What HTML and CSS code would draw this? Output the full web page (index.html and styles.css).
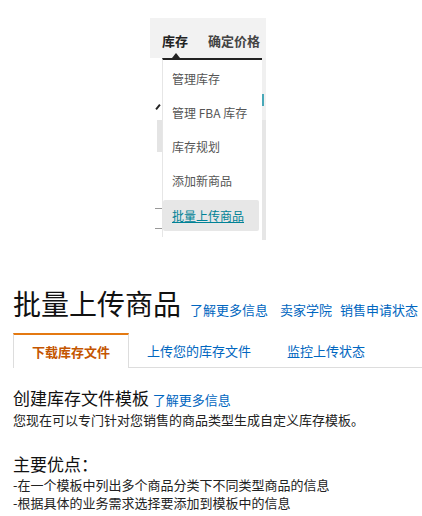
FILE: index.html
```html
<!DOCTYPE html>
<html lang="zh-CN">
<head>
    <meta charset="UTF-8">
    <meta name="viewport" content="width=device-width, initial-scale=1.0">
    <title>批量上传商品</title>
    <link rel="stylesheet" href="styles.css">
</head>
<body>

    <div class="shot">
        <div class="shot-bar">
            <span class="bar-item active">库存</span>
            <span class="bar-item">确定价格</span>
        </div>
        <div class="shot-body">
            <div class="shot-left">
                <span class="slash"></span>
                <span class="gray-block"></span>
                <span class="tick tick-1"></span>
                <span class="tick tick-2"></span>
            </div>
            <div class="menu">
                <span class="caret"></span>
                <div class="menu-item">管理库存</div>
                <div class="menu-item">管理 FBA 库存</div>
                <div class="menu-item">库存规划</div>
                <div class="menu-item">添加新商品</div>
                <div class="menu-item selected"><a href="#">批量上传商品</a></div>
            </div>
            <div class="shot-right">
                <span class="teal-mark"></span>
                <span class="right-block"></span>
            </div>
        </div>
    </div>

    <div class="page">
        <div class="title-row">
            <h1>批量上传商品</h1>
            <a href="#" class="link">了解更多信息</a>
            <a href="#" class="link">卖家学院</a>
            <a href="#" class="link last">销售申请状态</a>
        </div>

        <ul class="tabs">
            <li class="tab active">下载库存文件</li>
            <li class="tab"><a href="#">上传您的库存文件</a></li>
            <li class="tab"><a href="#">监控上传状态</a></li>
            <li class="tab-rest"></li>
        </ul>

        <div class="content">
            <h2>创建库存文件模板 <a href="#" class="link">了解更多信息</a></h2>
            <p>您现在可以专门针对您销售的商品类型生成自定义库存模板。</p>

            <h2 class="mt">主要优点：</h2>
            <ul class="points">
                <li>-在一个模板中列出多个商品分类下不同类型商品的信息</li>
                <li>-根据具体的业务需求选择要添加到模板中的信息</li>
            </ul>
        </div>
    </div>

</body>
</html>
```

FILE: styles.css
```css
* {
    margin: 0;
    padding: 0;
    box-sizing: border-box;
}

body {
    font-family: "Noto Sans CJK SC", "Noto Sans", sans-serif;
    color: #222;
    background: #fff;
}

a {
    color: #0066c0;
    text-decoration: none;
}

/* embedded menu screenshot */
.shot {
    width: 116px;
    height: 222px;
    margin: 18px 0 0 150px;
    display: flex;
    flex-direction: column;
}

.shot-bar {
    height: 40px;
    background: #f2f2f2;
    display: flex;
    align-items: center;
    gap: 20px;
    padding: 4px 0 0 12px;
    font-size: 13px;
    font-weight: bold;
    color: #444;
}

.bar-item.active {
    color: #222;
}

.shot-body {
    flex: 1;
    display: flex;
}

.shot-left {
    width: 12px;
    position: relative;
}

.slash {
    position: absolute;
    left: 7px;
    top: 46px;
    width: 2px;
    height: 6px;
    background: #222;
    transform: rotate(40deg);
}

.gray-block {
    position: absolute;
    left: 7px;
    top: 62px;
    width: 5px;
    height: 32px;
    background: #e4e4e4;
}

.tick {
    position: absolute;
    left: 5px;
    width: 7px;
    height: 1px;
    background: #999;
}

.tick-1 {
    top: 150px;
}

.tick-2 {
    top: 170px;
}

.menu {
    width: 100px;
    height: 179px;
    background: #fff;
    border-top: 2px solid #222;
    border-left: 1px solid #e6e6e6;
    padding-top: 1px;
    position: relative;
}

.caret {
    position: absolute;
    left: 9px;
    top: -7px;
    border-left: 4px solid transparent;
    border-right: 4px solid transparent;
    border-bottom: 5px solid #222;
}

.menu-item {
    height: 34px;
    display: flex;
    align-items: center;
    padding-left: 9px;
    font-size: 12px;
    color: #555;
}

.menu-item.selected {
    height: 31px;
    margin: 3px 3px 0 0;
    background: #e7e7e7;
    border-radius: 2px;
}

.menu-item.selected a {
    color: #008296;
    text-decoration: underline;
}

.shot-right {
    flex: 1;
    background: #f0f0f0;
    position: relative;
}

.teal-mark {
    position: absolute;
    left: 0;
    top: 36px;
    width: 2px;
    height: 12px;
    background: #48a8b8;
}

.right-block {
    position: absolute;
    left: 0;
    right: 0;
    top: 62px;
    bottom: 0;
    background: #e6e6e6;
}

/* page */
.page {
    padding: 0 0 0 13px;
}

.title-row {
    margin-top: 46px;
    display: flex;
    align-items: baseline;
    gap: 12px;
}

.title-row .last {
    margin-left: -4px;
}

h1 {
    font-size: 28px;
    font-weight: normal;
    line-height: 34px;
    color: #111;
    margin-right: -3px;
}

.link {
    font-size: 13px;
}

.tabs {
    list-style: none;
    display: flex;
    margin-top: 13px;
    height: 35px;
}

.tab {
    display: flex;
    align-items: center;
    padding: 0 18px;
    font-size: 13px;
    border-bottom: 1px solid #ddd;
}

.tab.active {
    border: 1px solid #ddd;
    border-top: 2px solid #e47911;
    border-bottom: none;
    color: #c45500;
    font-weight: bold;
}

.tab-rest {
    flex: 1;
    border-bottom: 1px solid #ddd;
}

.content {
    margin-top: 20px;
}

h2 {
    font-size: 17px;
    font-weight: normal;
    line-height: 20px;
    color: #111;
}

.content p {
    font-size: 13px;
    line-height: 19px;
}

.mt {
    margin-top: 25px;
}

.points {
    list-style: none;
    margin-top: 2px;
    font-size: 13px;
    line-height: 18px;
}
```
